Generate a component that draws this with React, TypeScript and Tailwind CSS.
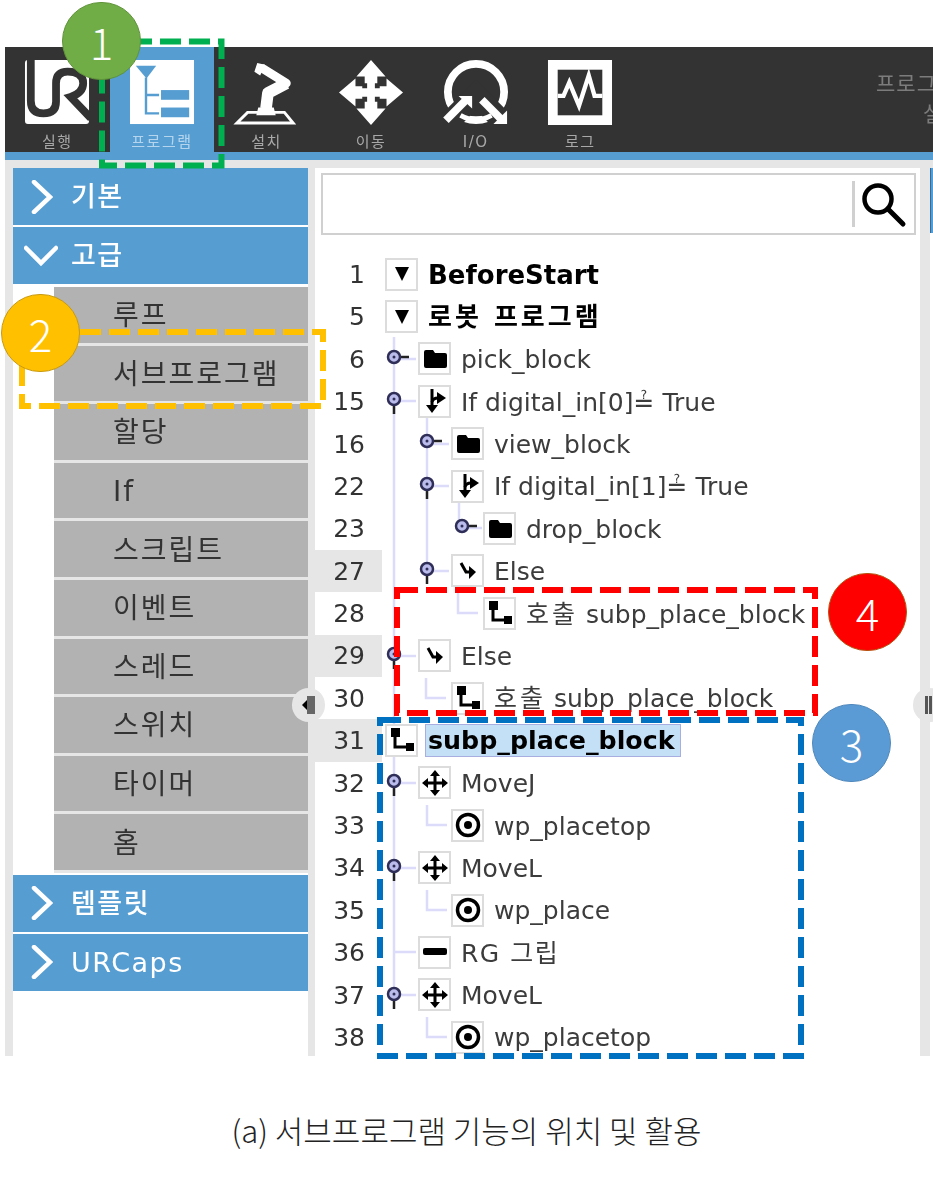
import type { ReactNode } from "react";

const tabs = [
  { label: "실행", icon: <UrLogo /> },
  { label: "프로그램", icon: <ProgramIcon />, active: true },
  { label: "설치", icon: <RobotIcon /> },
  { label: "이동", icon: <MoveBigIcon /> },
  { label: "I/O", icon: <IoIcon /> },
  { label: "로그", icon: <LogIcon /> },
];

const advancedItems = ["루프", "서브프로그램", "할당", "If", "스크립트", "이벤트", "스레드", "스위치", "타이머", "홈"];

type Row = {
  n: number;
  indent: string;
  icon: ReactNode;
  text: ReactNode;
  bold?: boolean;
  selected?: boolean;
  shaded?: boolean;
};

const lvl0 = "ml-[3px]";
const lvl1 = "ml-[36px]";
const lvl2 = "ml-[69px]";
const lvl3 = "ml-[101px]";

const callText = (
  <>
    <span className="tracking-[3px]">호출</span> subp_place_block
  </>
);

const rows: Row[] = [
  { n: 1, indent: lvl0, icon: <TriIcon />, text: "BeforeStart", bold: true },
  { n: 5, indent: lvl0, icon: <TriIcon />, text: <span className="tracking-[3px]">로봇 프로그램</span>, bold: true },
  { n: 6, indent: lvl1, icon: <FolderIcon />, text: "pick_block" },
  { n: 15, indent: lvl1, icon: <IfIcon />, text: "If digital_in[0]≟ True" },
  { n: 16, indent: lvl2, icon: <FolderIcon />, text: "view_block" },
  { n: 22, indent: lvl2, icon: <IfIcon />, text: "If digital_in[1]≟ True" },
  { n: 23, indent: lvl3, icon: <FolderIcon />, text: "drop_block" },
  { n: 27, indent: lvl2, icon: <ElseIcon />, text: "Else", shaded: true },
  { n: 28, indent: lvl3, icon: <CallIcon />, text: callText },
  { n: 29, indent: lvl1, icon: <ElseIcon />, text: "Else", shaded: true },
  { n: 30, indent: lvl2, icon: <CallIcon />, text: callText },
  { n: 31, indent: lvl0, icon: <CallIcon />, text: "subp_place_block", bold: true, selected: true, shaded: true },
  { n: 32, indent: lvl1, icon: <MoveIcon />, text: "MoveJ" },
  { n: 33, indent: lvl2, icon: <TargetIcon />, text: "wp_placetop" },
  { n: 34, indent: lvl1, icon: <MoveIcon />, text: "MoveL" },
  { n: 35, indent: lvl2, icon: <TargetIcon />, text: "wp_place" },
  { n: 36, indent: lvl1, icon: <MinusIcon />, text: <span className="tracking-[1.5px]">RG 그립</span> },
  { n: 37, indent: lvl1, icon: <MoveIcon />, text: "MoveL" },
  { n: 38, indent: lvl2, icon: <TargetIcon />, text: "wp_placetop" },
];

function UrLogo() {
  return (
    <svg width="66" height="67" viewBox="0 0 66 67">
      <rect x="0" y="0" width="66" height="66" rx="3" fill="#fff" />
      <path
        d="M6 -2V42Q6 55 19 55Q32 55 32 43V24Q32 12 44 12Q60 12 60 24Q60 34 47 38L68 60"
        fill="none"
        stroke="#333"
        strokeWidth="8"
      />
    </svg>
  );
}

function ProgramIcon() {
  return (
    <svg width="66" height="67" viewBox="0 0 66 67">
      <rect width="66" height="66" fill="#fff" />
      <path d="M6 6H27L17 19Z" fill="#569dd2" />
      <path d="M16.500 18V55H30M16.500 36H30" fill="none" stroke="#569dd2" strokeWidth="2.500" />
      <rect x="32" y="31" width="29" height="10" fill="#569dd2" />
      <rect x="32" y="49" width="29" height="10" fill="#569dd2" />
    </svg>
  );
}

function RobotIcon() {
  return (
    <svg width="66" height="67" viewBox="0 0 66 67">
      <path d="M14 54H52L61 65H3Z" fill="none" stroke="#fff" strokeWidth="3" />
      <path d="M23 57H43L41 49H25Z" fill="#fff" />
      <path d="M33 50L35 34L54 24" fill="none" stroke="#fff" strokeWidth="12" strokeLinejoin="round" />
      <path d="M54 24L30 9" fill="none" stroke="#fff" strokeWidth="9" strokeLinecap="round" />
      <path d="M24 3L32 5L27 16L21 12Z" fill="#fff" />
    </svg>
  );
}

function MoveBigIcon() {
  return (
    <svg width="66" height="67" viewBox="0 0 66 67">
      <path d="M33 0L48 17H18Z M33 67L48 50H18Z M0 33.500L17 19V48Z M66 33.500L49 19V48Z" fill="#fff" />
      <path d="M33 10V57M10 33.500H56" stroke="#fff" strokeWidth="13" />
      <path d="M24 24h5v5h-5zM37 24h5v5h-5zM24 38h5v5h-5zM37 38h5v5h-5z" fill="#333" />
    </svg>
  );
}

function IoIcon() {
  return (
    <svg width="68" height="67" viewBox="0 0 68 67">
      <circle cx="34" cy="33" r="29" fill="none" stroke="#fff" strokeWidth="8" />
      <path d="M-2 72L34 36L70 72" fill="none" stroke="#333" strokeWidth="22" />
      <path d="M3 62L25 40" stroke="#fff" strokeWidth="8" />
      <path d="M16 37H30V50Z" fill="#fff" />
      <path d="M40 41L61 62" stroke="#fff" strokeWidth="8" />
      <path d="M66 66H52L66 52Z" fill="#fff" />
      <path d="M18 57Q34 66 50 57" fill="none" stroke="#fff" strokeWidth="5" />
    </svg>
  );
}

function LogIcon() {
  return (
    <svg width="66" height="67" viewBox="0 0 66 67">
      <rect x="5" y="5" width="56" height="57" fill="#333" stroke="#fff" strokeWidth="10" />
      <path d="M10 37H16L22 23L32 47L42 16L48 37H56" fill="none" stroke="#fff" strokeWidth="4.500" />
    </svg>
  );
}

function TriIcon() {
  return (
    <svg width="20" height="20" viewBox="0 0 20 20">
      <path d="M3 3H17L10 17Z" fill="#000" />
    </svg>
  );
}

function FolderIcon() {
  return (
    <svg width="24" height="20" viewBox="0 0 24 20">
      <path d="M1 3Q1 1 3 1H10L12 4H22Q24 4 24 6V17Q24 19 22 19H3Q1 19 1 17Z" fill="#000" />
    </svg>
  );
}

function IfIcon() {
  return (
    <svg width="24" height="26" viewBox="0 0 24 26">
      <path d="M9 1V19" stroke="#000" strokeWidth="3" fill="none" />
      <path d="M3 17H15L9 25Z" fill="#000" />
      <path d="M9 14Q10 10 15 10" stroke="#000" strokeWidth="3" fill="none" />
      <path d="M14 4L23 10L14 16Z" fill="#000" />
    </svg>
  );
}

function ElseIcon() {
  return (
    <svg width="20" height="20" viewBox="0 0 20 20">
      <path d="M3 2L8 11H12" stroke="#000" strokeWidth="3" fill="none" />
      <path d="M11 5L18 11L11 18Z" fill="#000" />
    </svg>
  );
}

function CallIcon() {
  return (
    <svg width="26" height="26" viewBox="0 0 26 26">
      <rect x="2" y="1" width="9" height="9" fill="#000" />
      <path d="M6 8V20H18" stroke="#000" strokeWidth="3" fill="none" />
      <rect x="17" y="16" width="8" height="8" fill="#000" />
    </svg>
  );
}

function MoveIcon() {
  return (
    <svg width="28" height="28" viewBox="0 0 28 28">
      <path d="M14 1L19 7H9Z M14 27L19 21H9Z M1 14L7 9V19Z M27 14L21 9V19Z" fill="#000" />
      <path d="M14 5V23M5 14H23" stroke="#000" strokeWidth="3" />
    </svg>
  );
}

function TargetIcon() {
  return (
    <svg width="28" height="28" viewBox="0 0 28 28">
      <circle cx="14" cy="14" r="10.500" fill="none" stroke="#000" strokeWidth="3.500" />
      <circle cx="14" cy="14" r="4" fill="#000" />
    </svg>
  );
}

function MinusIcon() {
  return (
    <svg width="24" height="10" viewBox="0 0 24 10">
      <rect x="0" y="1" width="24" height="7" rx="2" fill="#000" />
    </svg>
  );
}

function Pin({ x, y, stub }: { x: number; y: number; stub: "down" | "right" }) {
  return (
    <g>
      {stub === "down" ? (
        <path d={`M${x} ${y + 5}V${y + 15}`} stroke="#222" strokeWidth="2.500" />
      ) : (
        <path d={`M${x + 5} ${y}H${x + 15}`} stroke="#222" strokeWidth="2.500" />
      )}
      <circle cx={x} cy={y} r="6" fill="#bcbcec" stroke="#2e2e58" strokeWidth="2.500" />
      <circle cx={x} cy={y} r="1.500" fill="#2e2e58" />
    </g>
  );
}

// connector lines between the tree rows, in page coordinates
function TreeGuides() {
  return (
    <svg className="absolute left-0 top-0 pointer-events-none" width="605" height="803" viewBox="315 253 605 803">
      <g fill="none" stroke="#dcdcfa" strokeWidth="2.500">
        <path d="M394 337V995" />
        <path d="M427 418V571" />
        <path d="M459 503V528" />
        <path d="M394 359H416M394 401H416M427 444H449M427 486H449M462 528H482M427 571H449" />
        <path d="M458 593V613H478" />
        <path d="M394 656H416" />
        <path d="M426 678V698H446" />
        <path d="M394 783H416M394 868H416M394 952H416M394 995H416" />
        <path d="M427 805V825H447M427 890V910H447M427 1017V1037H447" />
      </g>
      <Pin x={394} y={357} stub="right" />
      <Pin x={394} y={399} stub="down" />
      <Pin x={427} y={441} stub="right" />
      <Pin x={427} y={484} stub="down" />
      <Pin x={462} y={526} stub="right" />
      <Pin x={427} y={569} stub="down" />
      <Pin x={394} y={654} stub="down" />
      <Pin x={394} y={781} stub="down" />
      <Pin x={394} y={866} stub="down" />
      <Pin x={394} y={994} stub="down" />
    </svg>
  );
}

function Chevron({ open }: { open?: boolean }) {
  return open ? (
    <svg width="34" height="22" viewBox="0 0 34 22" className="ml-[11px] mr-[13px]">
      <path d="M2 3L17 18L32 3" fill="none" stroke="#fff" strokeWidth="4.500" strokeLinecap="round" />
    </svg>
  ) : (
    <svg width="22" height="34" viewBox="0 0 22 34" className="ml-[18px] mr-[18px]">
      <path d="M3 2L19 17L3 32" fill="none" stroke="#fff" strokeWidth="4.500" strokeLinecap="round" />
    </svg>
  );
}

function GroupRow({ label, open }: { label: string; open?: boolean }) {
  return (
    <div className="h-[57px] mb-[2px] bg-[#569dd2] flex items-center text-white text-[27px] font-medium tracking-[1.5px]">
      <Chevron open={open} />
      <span className="pt-[1px]">{label}</span>
    </div>
  );
}

function Badge({ n, className }: { n: number; className: string }) {
  return (
    <div
      className={`absolute w-[79px] h-[78px] rounded-full flex items-center justify-center text-white text-[44px] font-light border-[1.5px] ${className}`}
    >
      {n}
    </div>
  );
}

export default function App() {
  return (
    <div
      className="relative w-[933px] h-[1184px] bg-white overflow-hidden"
      style={{ fontFamily: '"DejaVu Sans", "Noto Sans CJK KR", sans-serif' }}
    >
      <div className="pt-[47px] pl-[5px] blur-[0.5px]">
        <div className="w-[928px] h-[1009px] flex flex-col bg-[#e6e6e6] overflow-hidden relative">
          <header className="h-[105px] shrink-0 bg-[#333333] flex">
            {tabs.map((tab) => (
              <div
                key={tab.label}
                className={`w-[104.6px] shrink-0 flex flex-col items-center pt-[13px] ${
                  tab.active ? "bg-[#569dd2] text-[#b5d5ee]" : "text-[#a8a8a8]"
                }`}
              >
                {tab.icon}
                <span className="mt-[7px] text-[15px] leading-[20px] tracking-[1.5px] whitespace-nowrap">{tab.label}</span>
              </div>
            ))}
            <div className="ml-auto w-[57px] pt-[22px] overflow-hidden text-[21px] leading-[30px] text-[#7c7c7c] whitespace-nowrap tracking-[1px]">
              <div>프로그램</div>
              <div className="pl-[47px]">설치</div>
            </div>
          </header>
          <div className="h-[8px] shrink-0 bg-[#569dd2]" />

          <div className="flex-1 flex pt-[8px] pl-[8px] min-h-0">
            <aside className="w-[295px] shrink-0 bg-white">
              <GroupRow label="기본" />
              <GroupRow label="고급" open />
              <div className="ml-[41px] pt-[1px] mb-[2px]">
                {advancedItems.map((item) => (
                  <div
                    key={item}
                    className="h-[58.6px] border-b-[3px] border-[#e6e6e6] bg-[#b2b2b2] flex items-center pl-[59px] pt-[3px] text-[28px] tracking-[2px] text-[#333333]"
                  >
                    {item}
                  </div>
                ))}
              </div>
              <GroupRow label="템플릿" />
              <GroupRow label="URCaps" />
            </aside>

            <main className="ml-[7px] w-[605px] shrink-0 bg-white flex flex-col">
              <div className="ml-[6px] mr-[4px] mt-[5px] h-[62px] border-2 border-[#d0d0d0] flex items-center justify-end">
                <div className="w-[3px] h-[46px] bg-[#d0d0d0] mr-[4px]" />
                <svg width="48" height="50" viewBox="0 0 48 50" className="mr-[7px]">
                  <circle cx="19" cy="20" r="13.500" fill="none" stroke="#000" strokeWidth="4.500" />
                  <path d="M29 30L44 45" stroke="#000" strokeWidth="5" strokeLinecap="round" />
                </svg>
              </div>
              <div className="relative mt-[18px] flex-1 min-h-0">
                <TreeGuides />
                {rows.map((row) => (
                  <div key={row.n} className="relative h-[42.4px] flex items-center">
                    <div
                      className={`w-[67px] h-full shrink-0 flex items-center justify-end pr-[17px] pt-[1px] text-[25px] text-[#333333] ${
                        row.shaded ? "bg-[#e6e6e6]" : ""
                      }`}
                    >
                      {row.n}
                    </div>
                    <div
                      className={`${row.indent} w-[33px] h-[33px] shrink-0 bg-white border-2 border-[#dcdcdc] flex items-center justify-center`}
                    >
                      {row.icon}
                    </div>
                    {row.selected ? (
                      <span className="ml-[7px] pl-[2px] pr-[5px] h-[33px] flex items-center bg-[#c3e0f7] border border-[#a9aee0] text-[25.3px] font-bold text-black whitespace-nowrap">
                        {row.text}
                      </span>
                    ) : (
                      <span
                        className={`ml-[10px] pt-[2px] whitespace-nowrap ${
                          row.bold ? "text-[26px] font-bold text-black" : "text-[25px] text-[#3c3c3c]"
                        }`}
                      >
                        {row.text}
                      </span>
                    )}
                  </div>
                ))}
              </div>
            </main>

            <div className="ml-[10px] w-[3px] shrink-0 bg-white">
              <div className="h-[65px] bg-[#569dd2] border-l border-[#2f6f9f]" />
            </div>
          </div>

          {/* collapse handles on the panel edges */}
          <div className="absolute left-[287px] top-[641px] w-[33px] h-[34px] rounded-full bg-[#e6e6e6] flex items-center justify-center">
            <div className="w-0 h-0 border-y-[5px] border-y-transparent border-r-[5px] border-r-black" />
            <div className="w-[8px] h-[18px] bg-[#666666]" />
          </div>
          <div className="absolute left-[908px] top-[641px] w-[33px] h-[34px] rounded-full bg-[#e6e6e6] flex items-center pl-[12px] gap-[1px]">
            <div className="w-[3px] h-[18px] bg-[#555555]" />
            <div className="w-[3px] h-[18px] bg-[#555555]" />
          </div>
        </div>
      </div>

      <p className="mt-[52px] text-center text-[31px] leading-[44px] font-light text-[#222222]" style={{ fontFamily: '"Noto Sans CJK KR", sans-serif' }}>
        (a) 서브프로그램 기능의 위치 및 활용
      </p>

      {/* annotation frames and numbered badges */}
      <svg className="absolute left-0 top-0 pointer-events-none" width="933" height="1184" fill="none">
        <rect x="102" y="41.500" width="119.500" height="124" stroke="#00b050" strokeWidth="6" strokeDasharray="21 8" />
        <rect x="22" y="332" width="301" height="74" stroke="#ffc000" strokeWidth="6" strokeDasharray="21 8" />
        <rect x="380" y="720" width="421" height="336" stroke="#0070c0" strokeWidth="6" strokeDasharray="21 8" />
        <rect x="397" y="590" width="418" height="123" stroke="#ff0000" strokeWidth="6" strokeDasharray="21 8" />
      </svg>
      <div style={{ fontFamily: '"Noto Sans CJK KR", sans-serif' }}>
        <Badge n={1} className="left-[62px] top-[2px] bg-[#70ad47] border-[#5f9339]" />
        <Badge n={2} className="left-[1px] top-[294px] bg-[#ffc000] border-[#c99a10]" />
        <Badge n={3} className="left-[812px] top-[704px] bg-[#5b9bd5] border-[#4f88bc]" />
        <Badge n={4} className="left-[828px] top-[573px] bg-[#ff0000] border-[#b5530f]" />
      </div>
    </div>
  );
}
